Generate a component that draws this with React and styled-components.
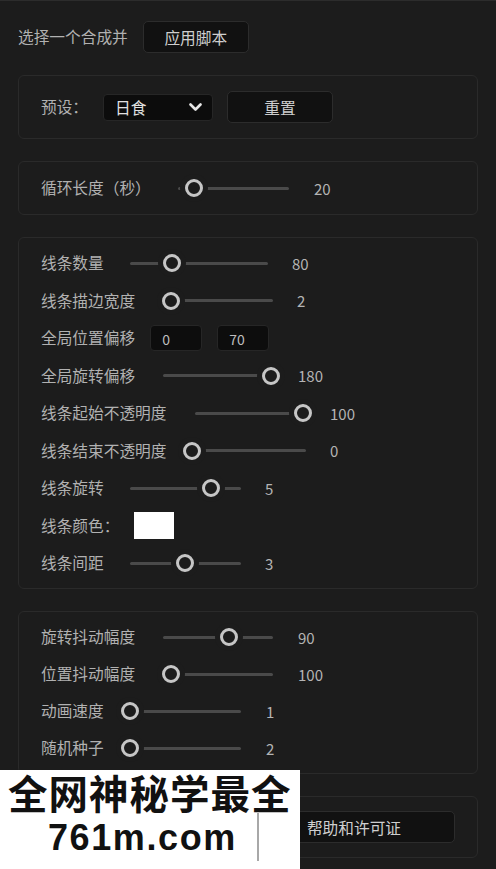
import React from 'react';
import styled, { createGlobalStyle } from 'styled-components';

const GlobalStyle = createGlobalStyle`
  html, body {
    margin: 0;
    padding: 0;
    background: #1c1c1c;
  }
  * {
    box-sizing: border-box;
  }
`;

const BG = '#1c1c1c';
const CONTENT_X = 41;

const Page = styled.div`
  position: relative;
  width: 496px;
  min-height: 869px;
  overflow: hidden;
  background: ${BG};
  border-top: 1px solid #2c2c2c;
  padding: 20px 18px 0 18px;
  display: flex;
  flex-direction: column;
  gap: 22px;
  font-family: "Noto Sans CJK SC", "Noto Sans", sans-serif;
  font-size: 15.7px;
  color: #b1b1b1;
`;

const TopRow = styled.div`
  display: flex;
  align-items: center;
  gap: 15px;
  height: 32px;
`;

const Text = styled.span`
  white-space: nowrap;
  line-height: 1;
`;

const Button = styled.button`
  height: 32px;
  width: ${(p) => p.$w}px;
  margin-left: ${(p) => p.$ml || 0}px;
  background: #111111;
  border: 1px solid #2c2c2c;
  border-radius: 5px;
  color: #cfcfcf;
  font-family: inherit;
  font-size: 15.7px;
  padding: 0;
  cursor: pointer;
`;

const Panel = styled.div`
  border: 1px solid #2a2a2a;
  border-radius: 6px;
  background: ${BG};
  padding: ${(p) => p.$pad || '12px 22px'};
  display: flex;
  flex-direction: column;
  gap: ${(p) => p.$gap || 11}px;
`;

const Row = styled.div`
  display: flex;
  align-items: center;
  height: ${(p) => p.$h || 26}px;
`;

const Label = styled.span`
  white-space: nowrap;
  line-height: 1;
  flex: none;
  width: ${(p) => (p.$w ? `${p.$w}px` : 'auto')};
`;

const SelectBox = styled.div`
  width: 110px;
  height: 27px;
  margin-left: 14px;
  background: #0c0c0c;
  border: 1px solid #262626;
  border-radius: 4px;
  display: flex;
  align-items: center;
  justify-content: space-between;
  padding: 0 10px 0 11px;
  color: #e0e0e0;
`;

const SliderBox = styled.div`
  position: relative;
  flex: none;
  height: 20px;
  width: ${(p) => p.$w}px;
`;

const Track = styled.div`
  position: absolute;
  top: 50%;
  height: 3px;
  margin-top: -1.5px;
  border-radius: 2px;
  background: #4a4a4a;
`;

const Thumb = styled.div`
  position: absolute;
  top: 1px;
  width: 18px;
  height: 18px;
  border-radius: 50%;
  border: 3px solid #c6c6c6;
  background: ${BG};
  box-shadow: 0 0 0 5px ${BG};
`;

const Value = styled.span`
  line-height: 1;
  font-size: 15px;
  color: #b4b4b4;
  margin-left: ${(p) => p.$ml}px;
`;

const NumInput = styled.div`
  width: 52px;
  height: 26px;
  background: #0d0d0d;
  border: 1px solid #262626;
  border-radius: 4px;
  padding: 3px 0 0 11px;
  font-size: 14px;
  color: #bdbdbd;
  margin-left: ${(p) => p.$ml}px;
`;

const Swatch = styled.div`
  width: 40px;
  height: 27px;
  background: #ffffff;
  margin-left: 15px;
`;

const ButtonRow = styled.div`
  display: flex;
  justify-content: flex-end;
`;

const Watermark = styled.div`
  position: absolute;
  left: 0;
  top: 769px;
  width: 300px;
  height: 100px;
  background: #ffffff;
  color: #111111;
  font-weight: 700;
`;

const WmTitle = styled.div`
  position: absolute;
  left: 8px;
  top: -2px;
  font-family: "Noto Sans CJK SC", sans-serif;
  font-size: 39.5px;
  letter-spacing: 1px;
  line-height: 1.2;
  white-space: nowrap;
`;

const WmUrl = styled.div`
  position: absolute;
  left: 48px;
  top: 46px;
  font-family: "Liberation Sans", Arial, sans-serif;
  font-size: 36px;
  letter-spacing: 1.6px;
  line-height: 1.2;
  white-space: nowrap;
`;

const WmBar = styled.div`
  position: absolute;
  left: 257px;
  top: 43px;
  width: 2px;
  height: 48px;
  background: #a8a8a8;
`;

const Chevron = () => (
  <svg width="13" height="9" viewBox="0 0 13 9">
    <path d="M1.5 1.5 L6.5 6.5 L11.5 1.5" fill="none" stroke="#e6e6e6" strokeWidth="2.6" strokeLinecap="round" strokeLinejoin="round" />
  </svg>
);

const SliderRow = ({ label, t0, t1, c, v, value }) => {
  const a = Math.min(t0, c - 9);
  const b = Math.max(t1, c + 9);
  return (
    <Row>
      <Label $w={a - CONTENT_X}>{label}</Label>
      <SliderBox $w={b - a}>
        <Track style={{ left: t0 - a, width: t1 - t0 }} />
        <Thumb style={{ left: c - 9 - a }} />
      </SliderBox>
      <Value $ml={v - b}>{value}</Value>
    </Row>
  );
};

const lineRowsA = [
  { label: '线条数量', t0: 130, t1: 268, c: 171.5, v: 292, value: '80' },
  { label: '线条描边宽度', t0: 171, t1: 273, c: 171, v: 297, value: '2' },
];

const lineRowsB = [
  { label: '全局旋转偏移', t0: 163, t1: 271, c: 271, v: 298, value: '180' },
  { label: '线条起始不透明度', t0: 195, t1: 302, c: 302.5, v: 330, value: '100' },
  { label: '线条结束不透明度', t0: 192, t1: 306, c: 192, v: 330, value: '0' },
  { label: '线条旋转', t0: 130, t1: 241, c: 210.5, v: 265, value: '5' },
];

const jitterRows = [
  { label: '旋转抖动幅度', t0: 163, t1: 273, c: 229, v: 298, value: '90' },
  { label: '位置抖动幅度', t0: 170.5, t1: 273, c: 170.5, v: 298, value: '100' },
  { label: '动画速度', t0: 129.5, t1: 241, c: 129.5, v: 266, value: '1' },
  { label: '随机种子', t0: 129.5, t1: 241, c: 129.5, v: 266, value: '2' },
];

export default function App() {
  return (
    <>
      <GlobalStyle />
      <Page>
        <TopRow>
          <Text>选择一个合成并</Text>
          <Button $w={106}>应用脚本</Button>
        </TopRow>

        <Panel $pad="15px 22px">
          <Row $h={32}>
            <Label $w={48}>预设：</Label>
            <SelectBox>
              <span>日食</span>
              <Chevron />
            </SelectBox>
            <Button $w={106} $ml={14}>重置</Button>
          </Row>
        </Panel>

        <Panel $pad="13px 22px">
          <SliderRow label="循环长度（秒）" t0={178} t1={289} c={194} v={314} value="20" />
        </Panel>

        <Panel $pad="12px 22px 12px 22px" $gap={11.5}>
          {lineRowsA.map((r) => (
            <SliderRow key={r.label} {...r} />
          ))}
          <Row>
            <Label>全局位置偏移</Label>
            <NumInput $ml={15}>0</NumInput>
            <NumInput $ml={15}>70</NumInput>
          </Row>
          {lineRowsB.map((r) => (
            <SliderRow key={r.label} {...r} />
          ))}
          <Row>
            <Label>线条颜色：</Label>
            <Swatch />
          </Row>
          <SliderRow label="线条间距" t0={130} t1={241} c={185} v={265} value="3" />
        </Panel>

        <Panel $pad="12px 22px" $gap={11}>
          {jitterRows.map((r) => (
            <SliderRow key={r.label} {...r} />
          ))}
        </Panel>

        <Panel $pad="14px 22px">
          <ButtonRow>
            <Button $w={202}>帮助和许可证</Button>
          </ButtonRow>
        </Panel>

        <Watermark>
          <WmTitle>全网神秘学最全</WmTitle>
          <WmUrl>761m.com</WmUrl>
          <WmBar />
        </Watermark>
      </Page>
    </>
  );
}
